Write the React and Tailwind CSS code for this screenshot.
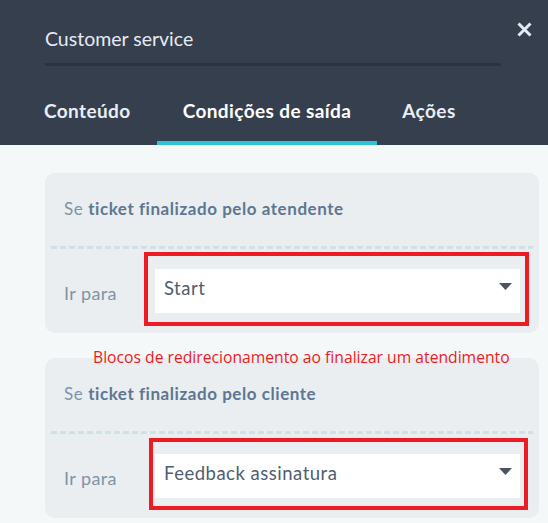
import React from "react";

function Card({ title, value }) {
  return (
    <div className="rounded-[10px] bg-[#eaeef0]">
      <div className="px-[19px] pt-[24px] pb-[25px] text-[17px] tracking-[0.55px] leading-[24px] text-[#7d94a9]">
        Se <span className="font-bold text-[#5d7792]">{title}</span>
      </div>
      <div className="mx-[6px] h-[3px] bg-[repeating-linear-gradient(to_right,#cfe1e6_0px,#cfe1e6_6px,transparent_6px,transparent_9px)]" />
      <div className="flex items-center pl-[19px] pr-[19px] pt-[20px] pb-[20px]">
        <div className="w-[91px] pt-[3px] text-[18px] tracking-[0.4px] leading-[24px] text-[#7f94a8]">Ir para</div>
        <div className="relative flex-1 h-[44px] bg-white pl-[9px] pt-[7px] text-[18.5px] tracking-[0.5px] leading-[24px] text-[#4f5e70]">
          {value}
          <svg className="absolute right-[8px] top-[14px]" width="13" height="7" viewBox="0 0 13 7">
            <path d="M0 0 L13 0 L6.5 7 Z" fill="#4a5561" />
          </svg>
        </div>
      </div>
    </div>
  );
}

export default function App() {
  return (
    <div className="relative w-[548px] h-[523px] overflow-hidden bg-[#f5f8f8] font-['Lato',sans-serif]">
      <header className="relative h-[145px] bg-[#363f4e]">
        <div className="ml-[45px] mr-[47px] pt-[27px] pb-[12px] border-b-[3px] border-[#2c333f] text-[19.5px] leading-[24px] text-[#e4ebf2]">
          Customer service
        </div>
        <button className="absolute left-[517px] top-[22px] w-[15px] h-[15px]">
          <svg width="15" height="15" viewBox="0 0 15 15">
            <path d="M1.5 1.5 L13.5 13.5 M13.5 1.5 L1.5 13.5" stroke="#e2ebf3" strokeWidth="3" strokeLinecap="butt" />
          </svg>
        </button>
        <nav className="flex pl-[18px] text-[19px] tracking-[0.4px] font-bold leading-[24px]">
          <div className="px-[26px] pt-[33px] pb-[18px] border-b-4 border-transparent text-[#e8eef3]">Conteúdo</div>
          <div className="px-[26px] pt-[33px] pb-[18px] border-b-4 border-[#2ec3d6] text-white">Condições de saída</div>
          <div className="px-[25px] pt-[33px] pb-[18px] border-b-4 border-transparent text-[#e8eef3]">Ações</div>
        </nav>
      </header>
      <main className="flex flex-col gap-[25px] pt-[28px] pl-[45px] pr-[9px]">
        <Card title="ticket finalizado pelo atendente" value="Start" />
        <Card title="ticket finalizado pelo cliente" value="Feedback assinatura" />
      </main>
      <div className="absolute left-[144px] top-[252px] w-[385px] h-[74px] border-4 border-[#ed1c24]" />
      <div className="absolute left-[149px] top-[438px] w-[379px] h-[72px] border-4 border-[#ed1c24]" />
      <div className="absolute left-[93px] top-[345px] text-[15.7px] leading-[24px] text-[#ed1c24] font-['Open_Sans',sans-serif] whitespace-nowrap">
        Blocos de redirecionamento ao finalizar um atendimento
      </div>
    </div>
  );
}
